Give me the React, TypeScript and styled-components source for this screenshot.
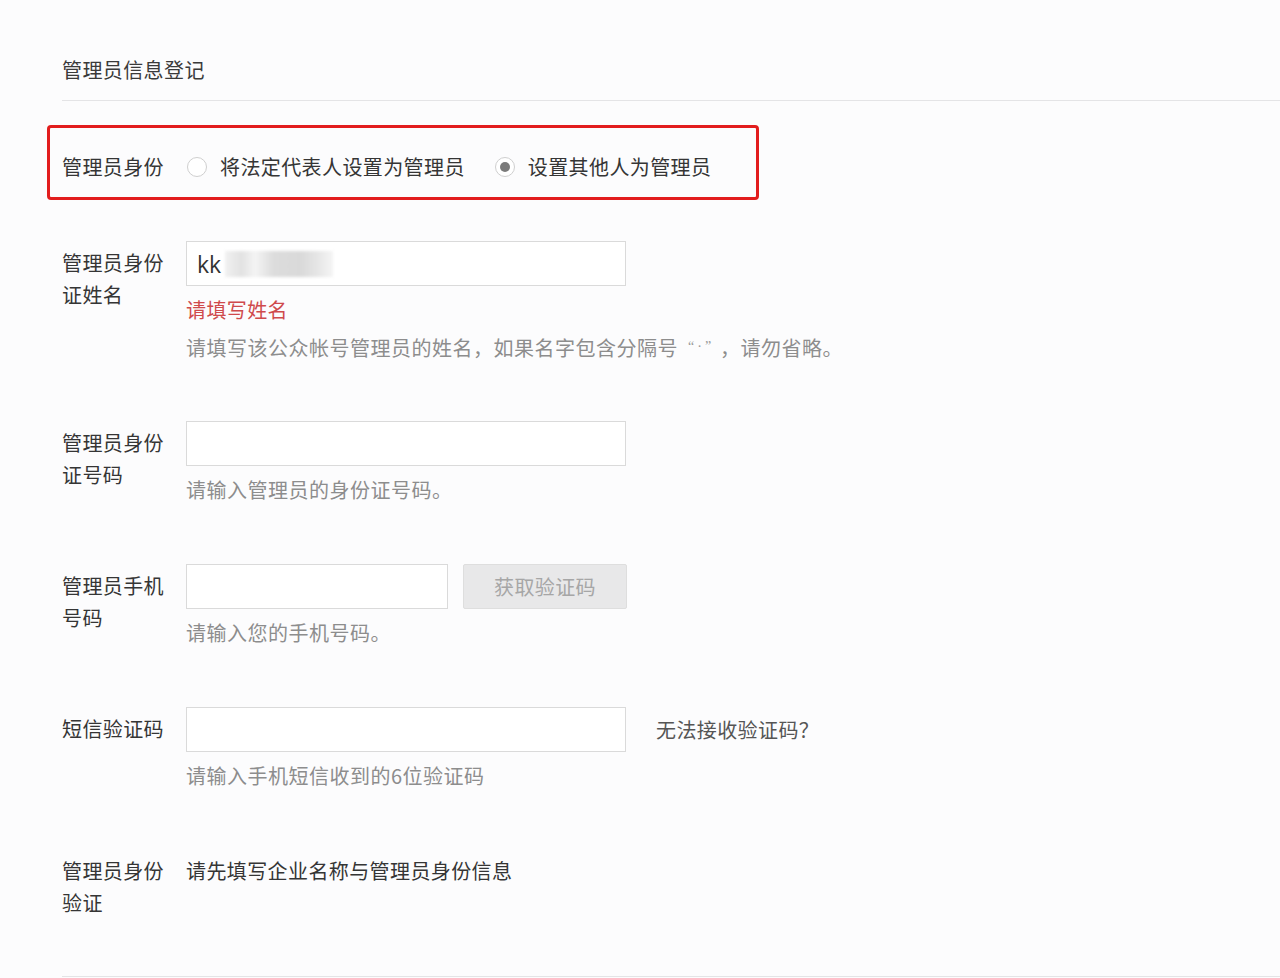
import React from "react";
import styled, { createGlobalStyle } from "styled-components";

const GlobalStyle = createGlobalStyle`
  html, body {
    margin: 0;
    padding: 0;
    background: #fcfcfd;
  }
  body {
    font-family: "Noto Sans CJK SC", "Noto Sans", sans-serif;
    color: #353535;
    letter-spacing: 0.4px;
  }
`;

const Page = styled.div`
  padding: 54px 0 0 62px;
  min-height: 978px;
  box-sizing: border-box;
`;

const Title = styled.div`
  font-size: 20px;
  line-height: 32px;
  color: #3a3a3a;
`;

const Divider = styled.div<{ $top: number }>`
  height: 1px;
  background: #e4e4e6;
  margin-top: ${(p) => p.$top}px;
`;

const Highlight = styled.div`
  margin: 24px 0 0 -15px;
  width: 712px;
  box-sizing: border-box;
  border: 3px solid #e21d1d;
  border-radius: 4px;
  padding: 23px 12px 14px;
  display: flex;
  align-items: center;
`;

const RadioLabel = styled.div`
  width: 125px;
  flex-shrink: 0;
  font-size: 20px;
  line-height: 32px;
`;

const RadioOption = styled.label`
  display: flex;
  align-items: center;
  gap: 13px;
  font-size: 20px;
  line-height: 32px;
  margin-right: 30px;
`;

const RadioCircle = styled.span<{ $checked?: boolean }>`
  width: 20px;
  height: 20px;
  box-sizing: border-box;
  border-radius: 50%;
  border: 1px solid #cfcfcf;
  background: #fff;
  display: flex;
  align-items: center;
  justify-content: center;

  &::after {
    content: "";
    display: ${(p) => (p.$checked ? "block" : "none")};
    width: 10px;
    height: 10px;
    border-radius: 50%;
    background: #7a7a7a;
  }
`;

const Row = styled.div<{ $top: number }>`
  display: grid;
  grid-template-columns: 124px 1fr;
  margin-top: ${(p) => p.$top}px;
`;

const Label = styled.div<{ $pad?: number }>`
  font-size: 20px;
  line-height: 32px;
  padding-top: ${(p) => p.$pad ?? 6}px;
  width: 110px;
`;

const Field = styled.div`
  display: flex;
  flex-direction: column;
`;

const Line = styled.div`
  display: flex;
  align-items: center;
`;

const Input = styled.div<{ $w: number }>`
  width: ${(p) => p.$w}px;
  height: 45px;
  box-sizing: border-box;
  border: 1px solid #dadada;
  background: #fff;
  display: flex;
  align-items: center;
  padding: 0 10px;
  font-family: "Open Sans", "Liberation Sans", sans-serif;
  font-size: 23px;
  letter-spacing: 0;
  color: #333;
`;

const Blur = styled.span`
  display: inline-block;
  width: 108px;
  height: 26px;
  margin-left: 4px;
  background: linear-gradient(
    90deg,
    #f1f1f1 0%,
    #e2e2e2 15%,
    #f4f4f4 28%,
    #dcdcdc 45%,
    #d9d9d9 70%,
    #e8e8e8 88%,
    #f5f5f5 100%
  );
  filter: blur(1.5px);
`;

const CodeButton = styled.div`
  width: 164px;
  height: 45px;
  box-sizing: border-box;
  margin-left: 15px;
  border: 1px solid #dedede;
  border-radius: 2px;
  background: #e8e8e9;
  color: #a6a6a6;
  font-size: 20px;
  display: flex;
  align-items: center;
  justify-content: center;
`;

const SideLink = styled.span`
  margin-left: 30px;
  font-size: 20px;
  color: #555;
`;

const Error = styled.div`
  margin-top: 8px;
  font-size: 20px;
  line-height: 32px;
  color: #cf4a4c;
`;

const Hint = styled.div<{ $top?: number }>`
  margin-top: ${(p) => p.$top ?? 8}px;
  font-size: 20px;
  line-height: 32px;
  letter-spacing: 0.5px;
  color: #8d8d8d;
  white-space: nowrap;
`;

const Quote = styled.span`
  font-family: "Liberation Serif", serif;
  font-size: 14px;
  letter-spacing: 3px;
  color: #999;
  margin: 0 6px 0 10px;
  vertical-align: 5px;
  line-height: 0;
`;

const Plain = styled.div`
  font-size: 20px;
  line-height: 32px;
`;

export default function App() {
  return (
    <>
      <GlobalStyle />
      <Page>
        <Title>管理员信息登记</Title>
        <Divider $top={14} />

        <Highlight>
          <RadioLabel>管理员身份</RadioLabel>
          <RadioOption>
            <RadioCircle />
            将法定代表人设置为管理员
          </RadioOption>
          <RadioOption>
            <RadioCircle $checked />
            设置其他人为管理员
          </RadioOption>
        </Highlight>

        <Row $top={41}>
          <Label>管理员身份证姓名</Label>
          <Field>
            <Line>
              <Input $w={440}>
                kk<Blur />
              </Input>
            </Line>
            <Error>请填写姓名</Error>
            <Hint $top={6}>
              请填写该公众帐号管理员的姓名，如果名字包含分隔号
              <Quote>“·”</Quote>，请勿省略。
            </Hint>
          </Field>
        </Row>

        <Row $top={57}>
          <Label>管理员身份证号码</Label>
          <Field>
            <Input $w={440} />
            <Hint>请输入管理员的身份证号码。</Hint>
          </Field>
        </Row>

        <Row $top={58}>
          <Label>管理员手机号码</Label>
          <Field>
            <Line>
              <Input $w={262} />
              <CodeButton>获取验证码</CodeButton>
            </Line>
            <Hint>请输入您的手机号码。</Hint>
          </Field>
        </Row>

        <Row $top={58}>
          <Label>短信验证码</Label>
          <Field>
            <Line>
              <Input $w={440} />
              <SideLink>无法接收验证码？</SideLink>
            </Line>
            <Hint>请输入手机短信收到的6位验证码</Hint>
          </Field>
        </Row>

        <Row $top={63}>
          <Label $pad={0}>管理员身份验证</Label>
          <Plain>请先填写企业名称与管理员身份信息</Plain>
        </Row>

        <Divider $top={57} />
      </Page>
    </>
  );
}
